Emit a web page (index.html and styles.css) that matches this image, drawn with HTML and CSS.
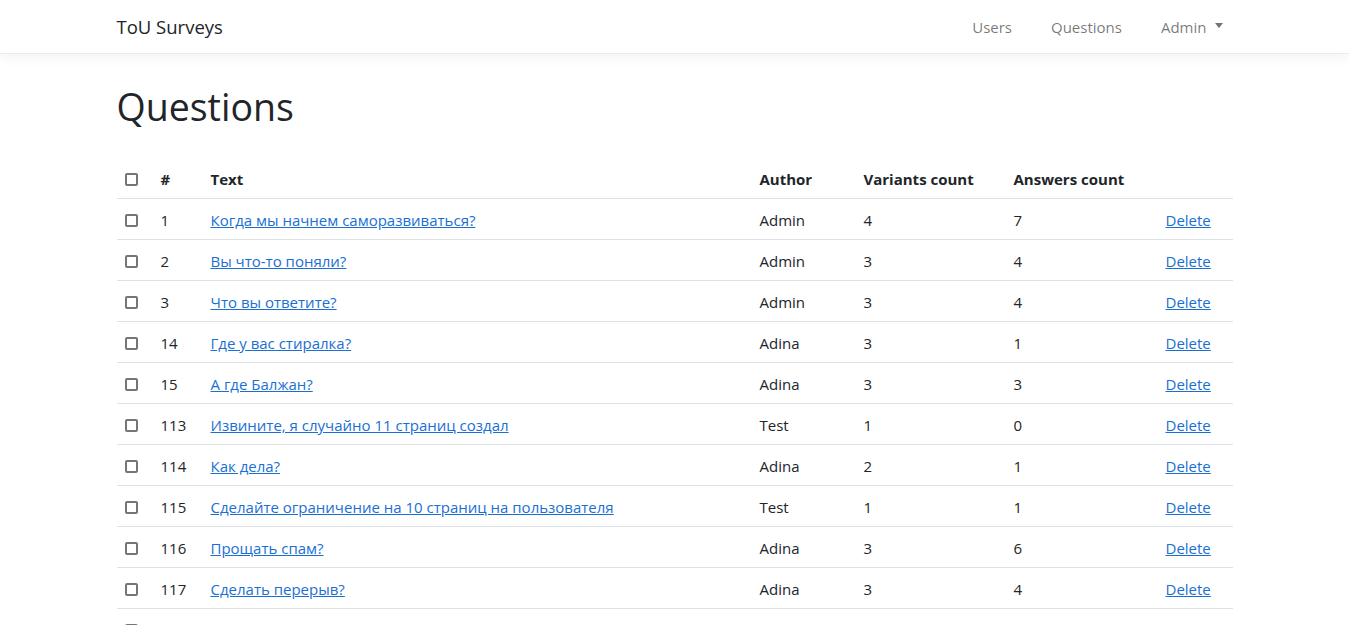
FILE: index.html
```html
<!DOCTYPE html>
<html lang="ru">
<head>
<meta charset="utf-8">
<title>Questions - ToU Surveys</title>
<link rel="stylesheet" href="styles.css">
</head>
<body>
<header class="navbar">
  <div class="container nav-inner">
    <a class="brand" href="#">ToU Surveys</a>
    <ul class="nav-links">
      <li><a class="nav-link" href="#">Users</a></li>
      <li><a class="nav-link" href="#">Questions</a></li>
      <li><a class="nav-link dropdown" href="#">Admin<span class="caret"></span></a></li>
    </ul>
  </div>
</header>
<main class="container main">
  <h1 class="title">Questions</h1>
  <table class="table">
    <thead>
      <tr>
        <th class="c-check"><span class="check"></span></th>
        <th class="c-id">#</th>
        <th class="c-text">Text</th>
        <th class="c-author">Author</th>
        <th class="c-var">Variants count</th>
        <th class="c-ans">Answers count</th>
        <th class="c-act"></th>
      </tr>
    </thead>
    <tbody>
      <tr><td><span class="check"></span></td><td>1</td><td><a href="#">Когда мы начнем саморазвиваться?</a></td><td>Admin</td><td>4</td><td>7</td><td><a href="#">Delete</a></td></tr>
      <tr><td><span class="check"></span></td><td>2</td><td><a href="#">Вы что-то поняли?</a></td><td>Admin</td><td>3</td><td>4</td><td><a href="#">Delete</a></td></tr>
      <tr><td><span class="check"></span></td><td>3</td><td><a href="#">Что вы ответите?</a></td><td>Admin</td><td>3</td><td>4</td><td><a href="#">Delete</a></td></tr>
      <tr><td><span class="check"></span></td><td>14</td><td><a href="#">Где у вас стиралка?</a></td><td>Adina</td><td>3</td><td>1</td><td><a href="#">Delete</a></td></tr>
      <tr><td><span class="check"></span></td><td>15</td><td><a href="#">А где Балжан?</a></td><td>Adina</td><td>3</td><td>3</td><td><a href="#">Delete</a></td></tr>
      <tr><td><span class="check"></span></td><td>113</td><td><a href="#">Извините, я случайно 11 страниц создал</a></td><td>Test</td><td>1</td><td>0</td><td><a href="#">Delete</a></td></tr>
      <tr><td><span class="check"></span></td><td>114</td><td><a href="#">Как дела?</a></td><td>Adina</td><td>2</td><td>1</td><td><a href="#">Delete</a></td></tr>
      <tr><td><span class="check"></span></td><td>115</td><td><a href="#">Сделайте ограничение на 10 страниц на пользователя</a></td><td>Test</td><td>1</td><td>1</td><td><a href="#">Delete</a></td></tr>
      <tr><td><span class="check"></span></td><td>116</td><td><a href="#">Прощать спам?</a></td><td>Adina</td><td>3</td><td>6</td><td><a href="#">Delete</a></td></tr>
      <tr><td><span class="check"></span></td><td>117</td><td><a href="#">Сделать перерыв?</a></td><td>Adina</td><td>3</td><td>4</td><td><a href="#">Delete</a></td></tr>
      <tr><td><span class="check"></span></td><td>118</td><td><a href="#">Как вы относитесь к тому, что тут нет модерации?</a></td><td>Test</td><td>2</td><td>0</td><td><a href="#">Delete</a></td></tr>
    </tbody>
  </table>
</main>
</body>
</html>
```

FILE: styles.css
```css
html, body {
  margin: 0;
  padding: 0;
}
body {
  font-family: "Open Sans", "Noto Sans", sans-serif;
  font-size: 15px;
  line-height: 24px;
  color: #212529;
  background: #fff;
}
a {
  color: #1a6fd4;
}
.container {
  max-width: 1116px;
  margin: 0 auto;
  box-sizing: content-box;
  padding: 0 12px;
}
.navbar {
  background: #fff;
  border-bottom: 1px solid #e9ecef;
  box-shadow: 0 4px 12px rgba(0, 0, 0, 0.05);
}
.nav-inner {
  display: flex;
  align-items: center;
  justify-content: space-between;
  height: 53px;
}
.brand {
  font-size: 18.5px;
  color: #212529;
  text-decoration: none;
  line-height: 30px;
}
.nav-links {
  display: flex;
  list-style: none;
  margin: 0 2px 0 0;
  padding: 0;
  gap: 23px;
}
.nav-link {
  display: flex;
  align-items: center;
  padding: 8px;
  color: rgba(0, 0, 0, 0.55);
  text-decoration: none;
}
.caret {
  display: inline-block;
  margin-left: 8px;
  border-top: 5px solid rgba(0, 0, 0, 0.55);
  border-left: 4px solid transparent;
  border-right: 4px solid transparent;
  margin-top: -2px;
}
.main {
  padding-top: 29px;
}
.title {
  font-size: 37.5px;
  font-weight: 400;
  line-height: 48px;
  margin: 0 0 27px;
}
.table {
  width: 100%;
  border-collapse: collapse;
  table-layout: fixed;
}
.table th,
.table td {
  padding: 9px 8px 7px;
  text-align: left;
  vertical-align: top;
  border-bottom: 1px solid #dee2e6;
  white-space: nowrap;
  overflow: hidden;
}
.table th {
  font-weight: 700;
}
.c-check { width: 20px; }
.c-id { width: 34px; }
.c-author { width: 88px; }
.c-var { width: 134px; }
.c-ans { width: 136px; }
.c-act { width: 59px; }
.check {
  display: inline-block;
  width: 13px;
  height: 13px;
  box-sizing: border-box;
  border: 2px solid #767676;
  border-radius: 2px;
  vertical-align: -1px;
}
```
